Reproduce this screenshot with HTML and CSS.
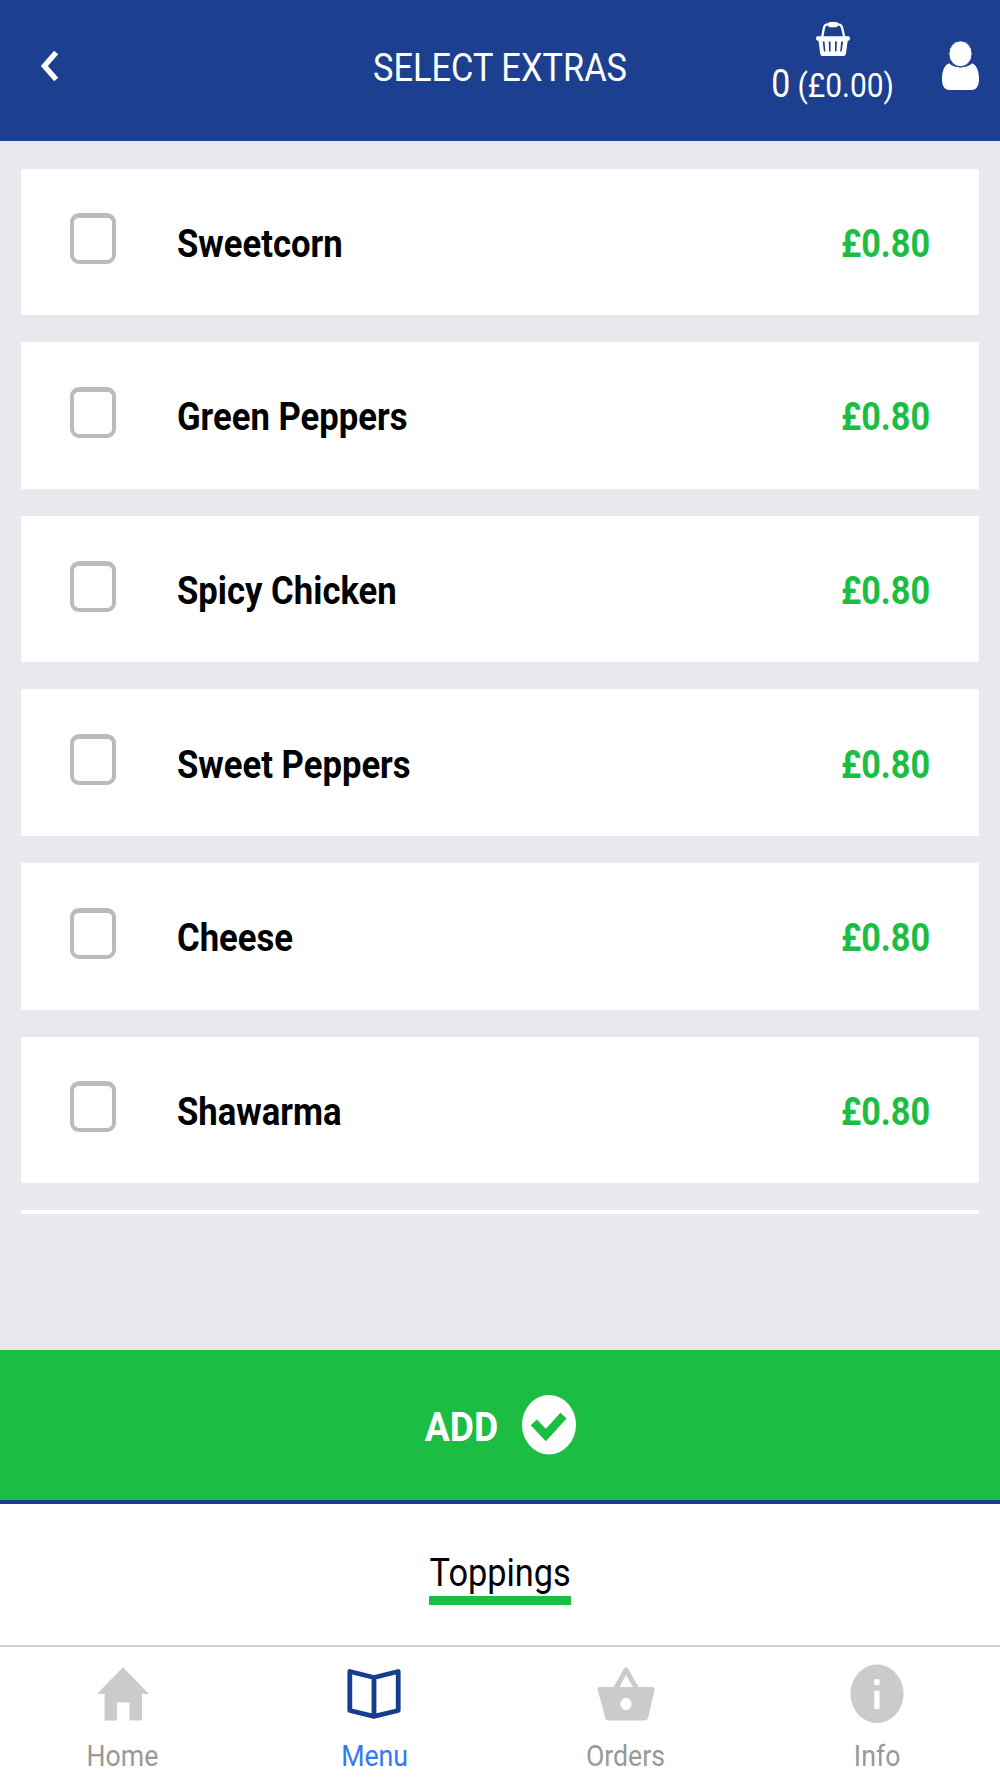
FILE: index.html
```html
<!DOCTYPE html>
<html lang="en">
<head>
<meta charset="utf-8">
<title>Select Extras</title>
<link rel="stylesheet" href="styles.css">
</head>
<body>
<div class="app">
  <header class="header">
    <div class="header-left">
      <svg class="back" viewBox="0 0 18 32"><path d="M15.2 2.5 3.3 16l11.9 13.5" fill="none" stroke="#fff" stroke-width="5.4"/></svg>
    </div>
    <h1 class="title"><span class="condensed">SELECT EXTRAS</span></h1>
    <div class="header-right">
      <div class="cart">
        <svg class="cart-icon" viewBox="0 0 34 34">
          <path d="M6.2 15 8 5.5Q8.700 2.300 12 2.300H22Q25.300 2.300 26 5.500L28.300 15" fill="none" stroke="#fff" stroke-width="2.300"/>
          <path d="M13.500 0h7q1.500 0 1.500 2.300T20.500 5.200h-7Q12 5.200 12 2.600T13.500 0Z" fill="#fff"/>
          <path fill-rule="evenodd" fill="#fff" d="M1.500 14.300h31q1.500 0 1.500 2t-1.500 2.500h-.800L30 31.500q-.500 2.500-2.500 2.500h-21Q4.500 34 4.200 31.500L2.500 18.800h-1Q0 18.500 0 16.300t1.500-2Zm5.200 5.200 1.200 10h1.500l-.900-10Zm6 0 .400 10h1.500v-10Zm6.300 0v10h1.500l.400-10Zm6.100 0-.900 10h1.500l1.400-10Z"/>
        </svg>
        <div class="cart-total"><span class="condensed count">0</span><span class="condensed amount">(£0.00)</span></div>
      </div>
      <svg class="user" viewBox="0 0 37 49"><path d="M7 22.300C11.500 27.800 25.500 27.800 30 22.300 35 24 37 31 37 38.500c0 6.500-3 10.500-7 10.500H7c-4 0-7-4-7-10.500C0 31 2 24 7 22.300Z" fill="#fff"/><ellipse cx="18.500" cy="12.800" rx="11.600" ry="13" fill="#fff" stroke="#1d3f8f" stroke-width="1"/></svg>
    </div>
  </header>

  <main class="list">
    <label class="card"><span class="box"></span><span class="condensed name">Sweetcorn</span><span class="condensed price">£0.80</span></label>
    <label class="card"><span class="box"></span><span class="condensed name">Green Peppers</span><span class="condensed price">£0.80</span></label>
    <label class="card"><span class="box"></span><span class="condensed name">Spicy Chicken</span><span class="condensed price">£0.80</span></label>
    <label class="card"><span class="box"></span><span class="condensed name">Sweet Peppers</span><span class="condensed price">£0.80</span></label>
    <label class="card"><span class="box"></span><span class="condensed name">Cheese</span><span class="condensed price">£0.80</span></label>
    <label class="card"><span class="box"></span><span class="condensed name">Shawarma</span><span class="condensed price">£0.80</span></label>
    <div class="card card-clipped"></div>
  </main>

  <div class="add">
    <span class="condensed add-label">ADD</span>
    <svg class="check" viewBox="0 0 54 59.500"><ellipse cx="27" cy="29.750" rx="27" ry="29.750" fill="#fff"/><path d="m11.800 27.300 12 12.700L41.500 20.700" fill="none" stroke="#1bbd43" stroke-width="8.400"/></svg>
  </div>

  <div class="tabs"><span class="tab"><span class="condensed tab-label">Toppings</span></span></div>

  <nav class="nav">
    <a class="item">
      <svg class="icon" viewBox="0 0 60 60"><path d="M30 3.200 4 30h7.500v26.500H24V38.500h12.500v18H49V30h7Z" fill="#cbcbcb"/></svg>
      <span class="condensed">Home</span>
    </a>
    <a class="item active">
      <svg class="icon" viewBox="0 0 60 60"><path d="M5.800 7.500 30 13.500 54.200 7.500V46.500L30 52.300 5.800 46.500ZM30 13.500V52" fill="none" stroke="#173d8f" stroke-width="4.800" stroke-linejoin="round"/></svg>
      <span class="condensed">Menu</span>
    </a>
    <a class="item">
      <svg class="icon" viewBox="0 0 60 60"><path fill-rule="evenodd" fill="#cbcbcb" d="M17.500 23 27.800 4.800Q30 1.600 32.200 4.800L42.500 23H56q2.800 0 2.500 3L52.300 53q-.900 3.500-3.500 3.500H12.500Q9.800 56.500 9 53L1.700 26q-.500-3 2-3Zm6 0H37L30 11ZM30 34a5.600 6 0 1 0 .010 0Z"/></svg>
      <span class="condensed">Orders</span>
    </a>
    <a class="item">
      <svg class="icon" viewBox="0 0 60 60"><path fill-rule="evenodd" fill="#cbcbcb" d="M30 .600a26.500 29.200 0 1 0 .010 0ZM27.200 15.200h5.400v5.900h-5.400Zm0 11.600h5.400v18.200h-5.400Z"/></svg>
      <span class="condensed">Info</span>
    </a>
  </nav>
</div>
</body>
</html>
```
FILE: styles.css
```css
* { box-sizing: border-box; }
body {
  margin: 0;
  background: #e9e8ee;
  font-family: Roboto, "Liberation Sans", sans-serif;
}
svg { display: block; flex: none; }
.app {
  width: 1000px;
  height: 1778px;
  display: flex;
  flex-direction: column;
  overflow: hidden;
}
/* The interface uses slightly narrowed lettering throughout */
.condensed {
  display: inline-block;
  white-space: nowrap;
  transform: scaleX(0.89);
}

.header {
  height: 140.600px;
  flex: none;
  display: grid;
  grid-template-columns: 1fr auto 1fr;
  align-items: start;
  background: #1d3f8f;
  color: #fff;
}
.header-left { padding: 50px 0 0 41px; }
.back { width: 18px; height: 32px; }
.title {
  margin: 0;
  padding-top: 43px;
  font-size: 39px;
  line-height: 50px;
  font-weight: 400;
}
.title .condensed { transform: scaleX(0.882); }
.header-right {
  display: flex;
  justify-content: flex-end;
  gap: 41px;
  padding-right: 21px;
}
.cart { display: flex; flex-direction: column; align-items: center; padding-top: 22px; }
.cart-icon { width: 34px; height: 34px; margin-right: 6px; }
.cart-total { display: flex; align-items: baseline; line-height: 46px; margin-top: 5px; }
.count { font-size: 38px; }
.amount { font-size: 34px; transform: scaleX(0.88); }
.user { width: 37px; height: 49px; margin-top: 41px; }

.list {
  height: 1209px;
  flex: none;
  padding: 28px 21px 0;
  display: flex;
  flex-direction: column;
  gap: 27px;
}
.card {
  height: 146.600px;
  flex: none;
  display: flex;
  align-items: center;
  padding: 0 49px 0 48.500px;
  background: #fff;
  font-size: 38px;
  font-weight: 700;
}
.card-clipped { height: 4px; }
.box {
  width: 46px;
  height: 51px;
  margin: 0 61.500px 6px 0;
  border: 4px solid #bbb;
  border-top-width: 5px;
  border-radius: 9px;
}
.name, .price { padding-top: 4px; }
.name { flex: 1; transform: scaleX(0.912); transform-origin: left; }
.price { color: #1bbd43; transform: scaleX(0.9); transform-origin: right; }

.add {
  height: 154.400px;
  flex: none;
  display: flex;
  justify-content: center;
  align-items: center;
  gap: 20px;
  border-bottom: 4px solid #1d3f8f;
  background: #1bbd43;
  color: #fff;
}
.add-label {
  margin: 0 4px 0 -4px;
  padding-top: 5px;
  font-size: 40px;
  font-weight: 700;
  transform: scaleX(0.93);
  transform-origin: 88% 50%;
}
.check { width: 54px; height: 59.500px; }

.tabs {
  height: 141px;
  flex: none;
  display: flex;
  justify-content: center;
  align-items: flex-start;
  background: #fff;
}
.tab {
  width: 141.500px;
  margin-top: 45px;
  display: flex;
  justify-content: center;
  border-bottom: 9px solid #1bbd43;
  font-size: 38px;
  line-height: 47px;
}
.tab-label { padding-top: 1px; margin-bottom: -1px; transform: scaleX(0.903); }

.nav {
  flex: 1;
  display: grid;
  grid-template-columns: repeat(4, 251.600px);
  justify-content: center;
  border-top: 2px solid #d0d0d0;
  background: #fff;
}
.item {
  display: flex;
  flex-direction: column;
  align-items: center;
  padding-top: 17px;
  color: #999;
  font-size: 30px;
  line-height: 36px;
}
.item .condensed { margin-top: 14px; }
.icon { width: 60px; height: 60px; }
.active { color: #3478f6; }
```
